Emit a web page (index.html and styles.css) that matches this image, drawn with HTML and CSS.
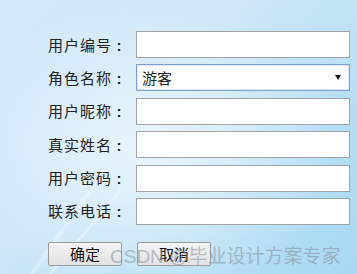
FILE: index.html
```html
<!DOCTYPE html>
<html lang="zh-CN">
<head>
  <meta charset="UTF-8">
  <title>用户信息</title>
  <link rel="stylesheet" href="styles.css">
</head>
<body>
  <div class="page">
    <form class="user-form">
      <label class="lbl">用户编号<span class="colon">:</span></label>
      <input class="field" type="text">
      <label class="lbl">角色名称<span class="colon">:</span></label>
      <div class="select">
        <span>游客</span>
        <i class="arrow"></i>
      </div>
      <label class="lbl">用户昵称<span class="colon">:</span></label>
      <input class="field" type="text">
      <label class="lbl">真实姓名<span class="colon">:</span></label>
      <input class="field" type="text">
      <label class="lbl">用户密码<span class="colon">:</span></label>
      <input class="field" type="password">
      <label class="lbl">联系电话<span class="colon">:</span></label>
      <input class="field" type="text">
    </form>
    <div class="btns">
      <button class="btn" type="button">确定</button>
      <button class="btn" type="button">取消</button>
    </div>
    <div class="mark">CSDN @毕业设计方案专家</div>
  </div>
</body>
</html>
```

FILE: styles.css
```css
*{
  margin: 0;
  padding: 0;
  box-sizing: border-box;
}
html,body{
  width: 357px;
  height: 274px;
  overflow: hidden;
}
body{
  font-family: "Noto Sans CJK SC", "Liberation Sans", sans-serif;
  font-size: 15px;
  color: #222;
  background:
    radial-gradient(ellipse 190px 150px at 150px 150px, rgba(235,246,252,.95), rgba(235,246,252,0) 100%),
    linear-gradient(135deg, #d3eaf8 0%, #cde7f7 40%, #b3def5 75%, #a7d8f3 100%);
}
.page{
  position: relative;
  height: 274px;
  padding: 31px 0 0 48px;
  background:
    linear-gradient(130deg, transparent 0 70%, rgba(255,255,255,.5) 71%, transparent 72%) 0 130px / 120px 144px no-repeat,
    linear-gradient(125deg, transparent 0 55%, rgba(255,255,255,.35) 57%, transparent 60%) 0 170px / 110px 104px no-repeat;
}
.user-form{
  display: grid;
  grid-template-columns: 88px 214px;
  grid-auto-rows: 27px;
  row-gap: 6.4px;
  align-items: center;
}
.lbl{
  line-height: 27px;
  letter-spacing: 1px;
  white-space: nowrap;
}
.colon{
  display: inline-block;
  width: 14px;
  text-align: center;
  font-family: "Liberation Sans", sans-serif;
  font-weight: bold;
  letter-spacing: 0;
}
.field{
  width: 214px;
  height: 27px;
  border: 1px solid #a2a2a2;
  background: #fff;
}
.select{
  height: 27px;
  border: 1px solid #7f9fcf;
  background: #fff;
  display: flex;
  align-items: center;
  justify-content: space-between;
  padding: 0 8px 0 5px;
  box-shadow: inset 0 0 0 1px #dfe8f5;
}
.arrow{
  width: 0;
  height: 0;
  border-left: 3.5px solid transparent;
  border-right: 3.5px solid transparent;
  border-top: 5px solid #111;
}
.btns{
  display: flex;
  gap: 15px;
  margin-top: 17px;
}
.btn{
  width: 74px;
  height: 24px;
  font-family: "Noto Sans CJK SC", sans-serif;
  font-size: 15px;
  color: #111;
  border: 1px solid #9c9c9c;
  border-radius: 2px;
  background: linear-gradient(#f4f4f4, #e2e2e2);
  line-height: 20px;
}
.mark{
  position: absolute;
  left: 110px;
  top: 241px;
  font-size: 19px;
  color: rgba(140,150,160,.6);
  font-family: "Liberation Sans", "Noto Sans CJK SC", sans-serif;
  white-space: nowrap;
}
```
